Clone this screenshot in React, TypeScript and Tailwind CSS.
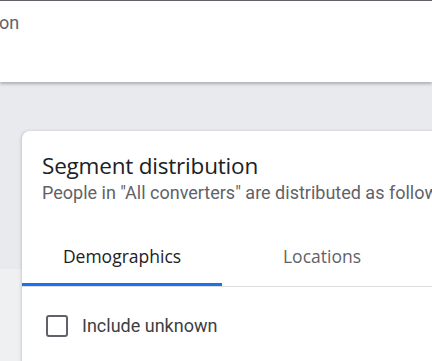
import React from 'react';

const tabs = [
  { label: 'Demographics', active: true },
  { label: 'Locations', active: false },
];

export default function App() {
  return (
    <div className="h-[361px] w-[432px] overflow-hidden bg-[#e8eaed] font-['Roboto',sans-serif]">
      {/* Top sheet */}
      <div className="relative z-10 h-[82px] border-t border-[#5f6368] bg-white shadow-[0_2px_3px_rgba(60,64,67,0.35)]">
        <div className="-ml-[1px] pt-[10px] text-[18px] leading-[24px] text-[#5f6368]">on</div>
      </div>

      {/* Card row */}
      <div className="mt-[49px] flex">
        <div className="w-[22px] shrink-0">
          <div className="h-[138px]" />
          <div className="h-[100px] bg-[#eff0f2]" />
        </div>
        <div className="h-[240px] w-[440px] shrink-0 rounded-tl-[8px] bg-white shadow-[-1px_0_3px_rgba(60,64,67,0.2)]">
          <div className="px-[20px] pt-[20px]">
            <h2 className="font-['Open_Sans',sans-serif] text-[22.5px] leading-[30px] tracking-[-0.2px] text-[#202124]">
              Segment distribution
            </h2>
            <p className="whitespace-nowrap text-[18px] leading-[24px] text-[#5f6368]">
              People in "All converters" are distributed as follows
            </p>
          </div>

          {/* Tabs */}
          <div className="mt-[29px] flex border-b border-[#dadce0]">
            {tabs.map((tab) => (
              <div
                key={tab.label}
                className={`flex h-[52px] w-[200px] items-start justify-center border-b-[3px] pt-[11px] font-['Open_Sans',sans-serif] text-[17.5px] font-medium leading-[22px] ${
                  tab.active ? 'border-[#1a73e8] text-[#202124]' : 'border-transparent text-[#5f6368]'
                }`}
              >
                {tab.label}
              </div>
            ))}
          </div>

          {/* Checkbox */}
          <div className="mt-[28px] flex items-center pl-[24px]">
            <div className="h-[22px] w-[22px] rounded-[3px] border-[2.5px] border-[#5f6368]" />
            <span className="ml-[14px] text-[18px] leading-[22px] text-[#3c4043]">Include unknown</span>
          </div>
        </div>
      </div>
    </div>
  );
}
